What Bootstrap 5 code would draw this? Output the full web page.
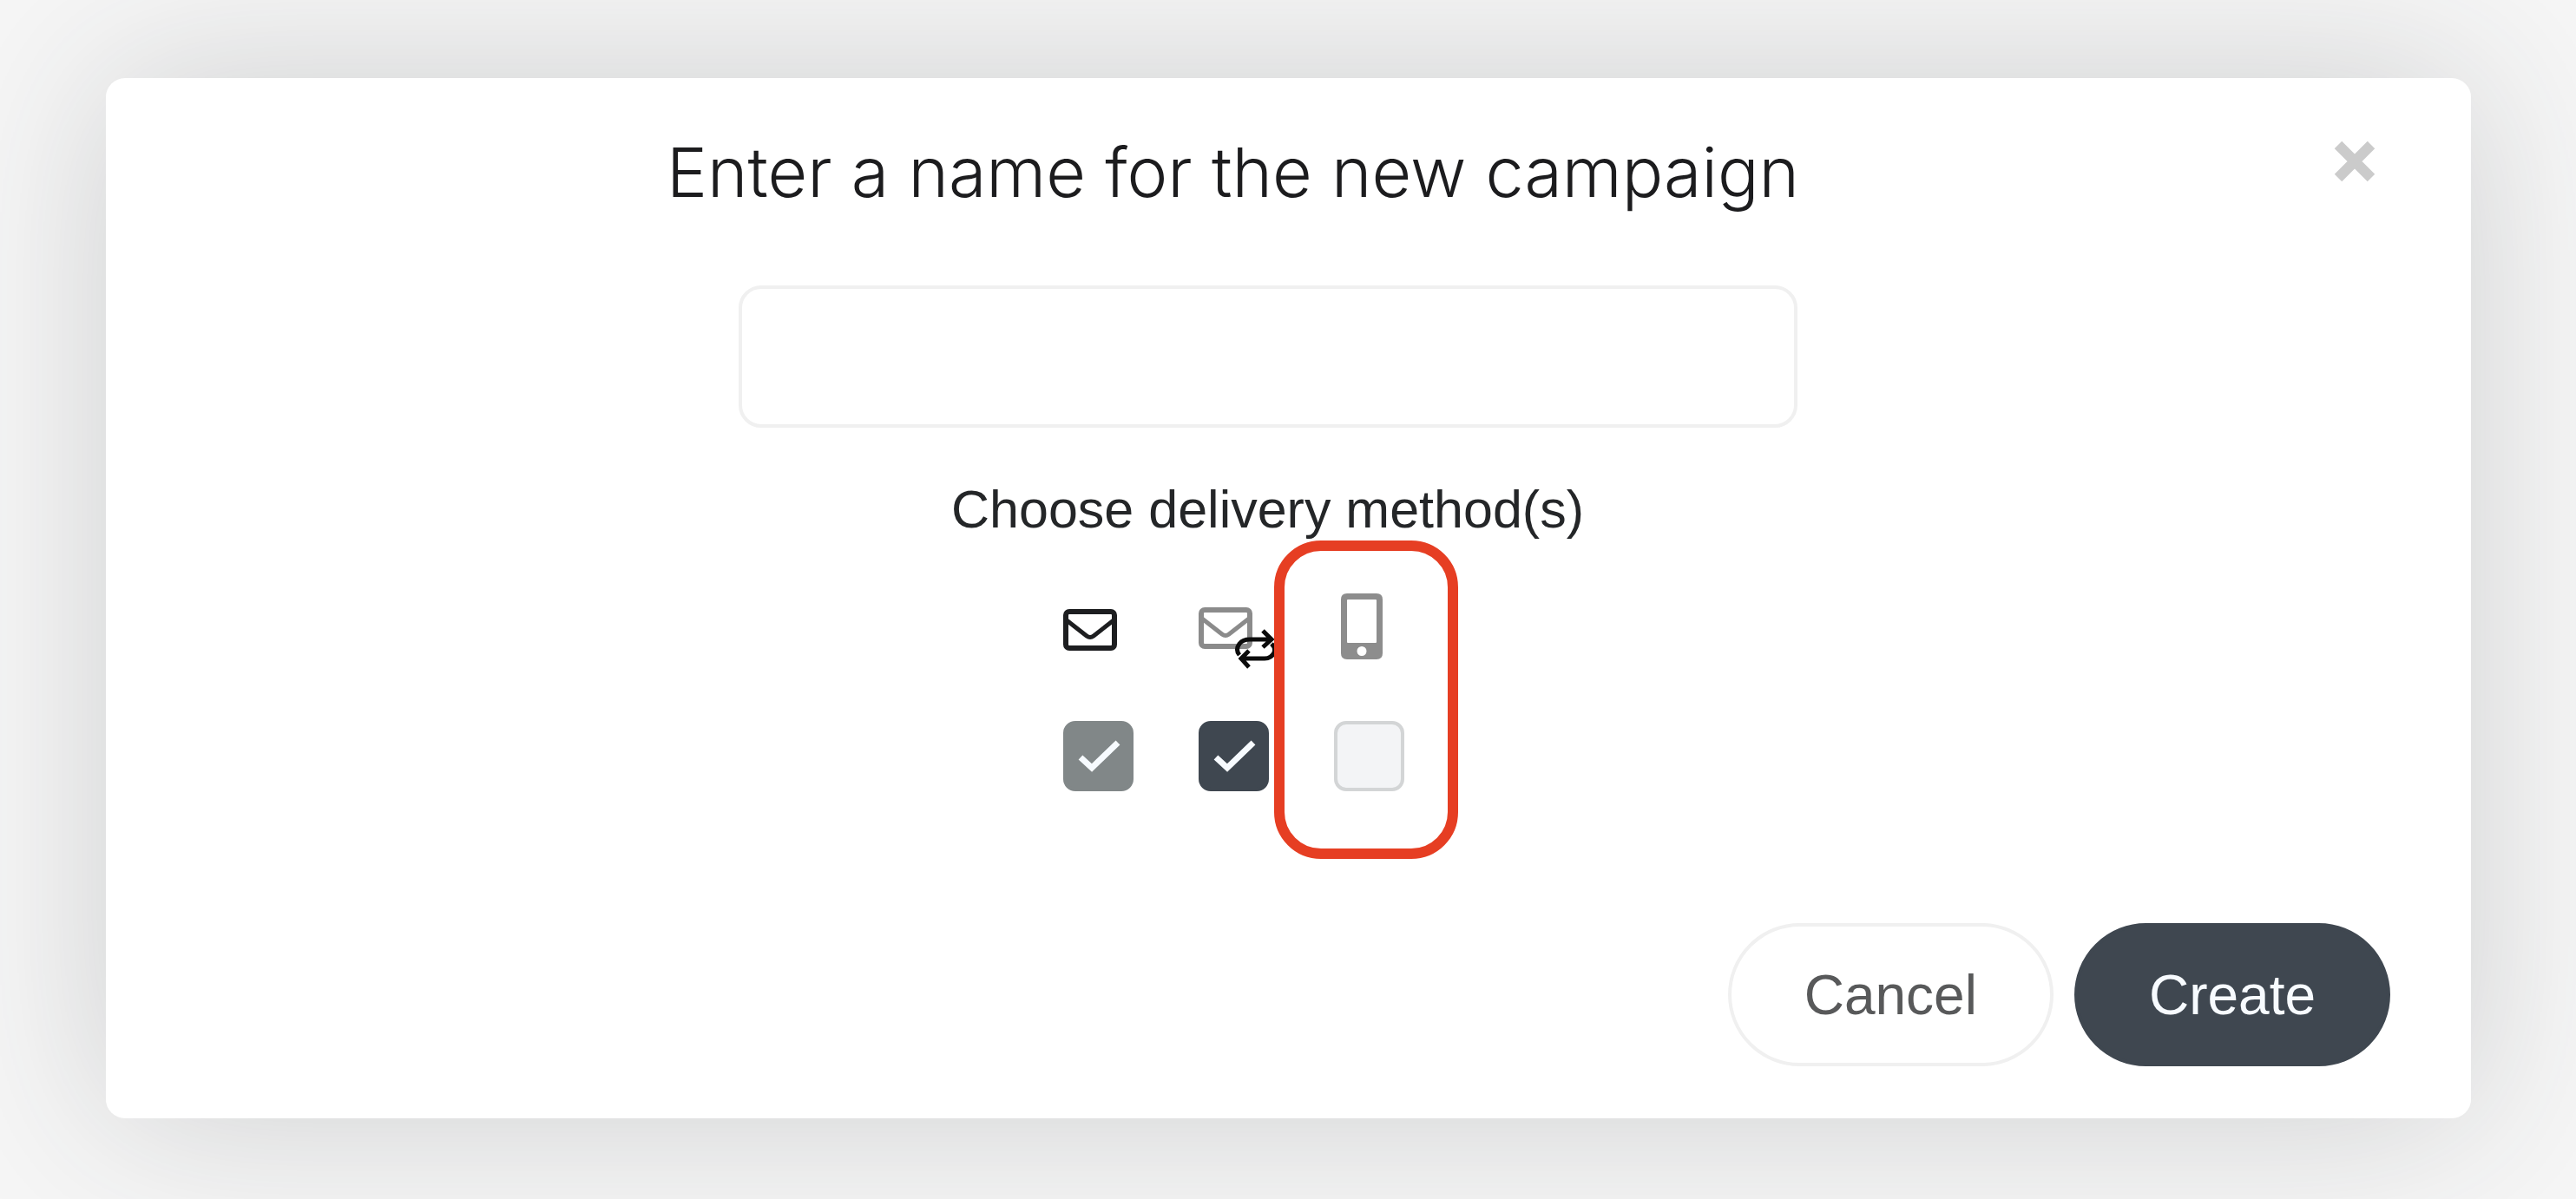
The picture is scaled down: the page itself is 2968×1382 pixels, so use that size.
<!DOCTYPE html>
<html lang="en">
<head>
<meta charset="utf-8">
<meta name="viewport" content="width=device-width, initial-scale=1">
<title>New campaign</title>
<link href="https://cdn.jsdelivr.net/npm/bootstrap@5.3.0/dist/css/bootstrap.min.css" rel="stylesheet">
<style>
  body { background: #f6f6f6; color: #202124; font-family: "Liberation Sans", Arial, sans-serif; min-height: 100vh; overflow-x: hidden; }
  .stage { padding: 90px 121px 92px 122px; }
  .dialog-panel { background: #fff; border-radius: 22px; box-shadow: 0 0 200px rgba(42, 50, 54, .19); padding-bottom: 60px; }
  .dialog-head { padding: 60px 110px 0 30px; }
  .dialog-title { font-family: Inter, "Liberation Sans", sans-serif; font-weight: 300; font-size: 79px; line-height: 96px; color: #1c1c1e; }
  .close-btn { width: 48px; height: 48px; margin-top: 12px; color: #cbcbcb; }
  .dialog-form { padding: 83px 48px 0 0; }
  .name-box { width: 1220px; max-width: 90%; height: 164px; border: 4px solid #f0f0f0; border-radius: 26px; font-size: 60px; padding: 0 32px; }
  .methods-title { font-size: 61px; line-height: 72px; margin: 58px 0 0; color: #242628; }
  .methods { padding: 60px 4px 0 0; }
  .method { width: 156px; }
  .method-icon { height: 78px; display: flex; align-items: center; }
  .method-icon svg { overflow: visible; }
  .mail-icon { padding-top: 8px; }
  .method .form-check-input { width: 81px; height: 81px; margin: 70px 0 0; border-radius: 14px; border: 4px solid #d3d5d6; background-color: #f3f4f6; float: none; opacity: 1; background-size: 81px 81px; }
  .method .form-check-input:checked { border-color: #3f4750; background-color: #3f4750; background-image: url("data:image/svg+xml,%3Csvg xmlns='http://www.w3.org/2000/svg' viewBox='0 0 81 81'%3E%3Cpath d='M20 42 33 54 63 25' fill='none' stroke='%23f7fbff' stroke-width='7'/%3E%3C/svg%3E"); }
  .method .form-check-input:checked:disabled { border-color: #818788; background-color: #818788; opacity: 1; }
  .callout { position: absolute; left: -69px; top: -60px; width: 212px; height: 367px; border: 12px solid #e63e23; border-radius: 54px; pointer-events: none; }
  .dialog-foot { padding: 152px 93px 0 0; gap: 24px; }
  .pill { height: 165px; border-radius: 83px; font-size: 64px; line-height: 76px; padding: 0 84px; border: 4px solid #f0f0f0; color: #58595a; background: #fff; }
  .pill-main { background: #3f4750; border-color: #3f4750; color: #f7fbff; padding: 0 82px; }
</style>
</head>
<body>
<main class="stage">
  <section class="dialog-panel" role="dialog" aria-labelledby="dlg-title">
    <header class="dialog-head d-flex align-items-start">
      <h1 class="dialog-title flex-grow-1 text-center mb-0" id="dlg-title">Enter a name for the new campaign</h1>
      <button type="button" class="close-btn btn p-0 border-0 d-flex" aria-label="Close">
        <svg width="48" height="48" viewBox="0 0 48 48" fill="none" stroke="currentColor" stroke-width="12"><path d="M5 5 43 43M43 5 5 43"/></svg>
      </button>
    </header>
    <form>
      <div class="dialog-form d-flex flex-column align-items-center">
        <input type="text" class="name-box form-control" aria-labelledby="dlg-title">
        <h2 class="methods-title fw-normal">Choose delivery method(s)</h2>
        <div class="methods d-flex">
          <div class="method">
            <label class="method-icon mail-icon" for="m-mail" aria-label="Email">
              <svg width="62" height="48" viewBox="0 0 62 48" fill="none" stroke="#1d1e20" stroke-width="6" stroke-linejoin="round"><rect x="3" y="3" width="56" height="42" rx="4"/><path d="M4 13 27 31Q31 34 35 31L58 13" stroke-width="5"/></svg>
            </label>
            <input class="form-check-input d-block" type="checkbox" id="m-mail" checked disabled>
          </div>
          <div class="method">
            <label class="method-icon mail-icon" for="m-repeat" aria-label="Recurring email">
              <svg width="90" height="48" viewBox="0 0 90 48" fill="none"><g stroke="#8b8b8b" stroke-width="6" stroke-linejoin="round"><rect x="3" y="1" width="56" height="42" rx="4"/><path d="M4 11 27 29Q31 32 35 29L58 11" stroke-width="5"/></g><g stroke="#0b0b0b" stroke-width="5"><path d="M47 53Q42 47 47 40Q51 35 59 35H82M74 25 84 35 74 44M84 40Q89 45 87 50Q84 57 76 57H50M58 48 49 57 58 67"/></g></svg>
            </label>
            <input class="form-check-input d-block" type="checkbox" id="m-repeat" checked>
          </div>
          <div class="method position-relative">
            <label class="method-icon ps-2" for="m-phone" aria-label="Text message">
              <svg width="48" height="76" viewBox="0 0 48 76"><path fill="#8d8d8d" fill-rule="evenodd" d="M7 0H41Q48 0 48 7V69Q48 76 41 76H7Q0 76 0 69V7Q0 0 7 0ZM8 7Q7 7 7 8V56Q7 57 8 57H40Q41 57 41 56V8Q41 7 40 7ZM24 61A5.500 5.500 0 1 0 24 72A5.500 5.500 0 1 0 24 61Z"/></svg>
            </label>
            <input class="form-check-input d-block" type="checkbox" id="m-phone">
            <span class="callout"></span>
          </div>
        </div>
      </div>
      <div class="dialog-foot d-flex justify-content-end">
        <button type="button" class="pill btn">Cancel</button>
        <button type="submit" class="pill pill-main btn">Create</button>
      </div>
    </form>
  </section>
</main>
<script src="https://cdn.jsdelivr.net/npm/bootstrap@5.3.0/dist/js/bootstrap.bundle.min.js"></script>
</body>
</html>
